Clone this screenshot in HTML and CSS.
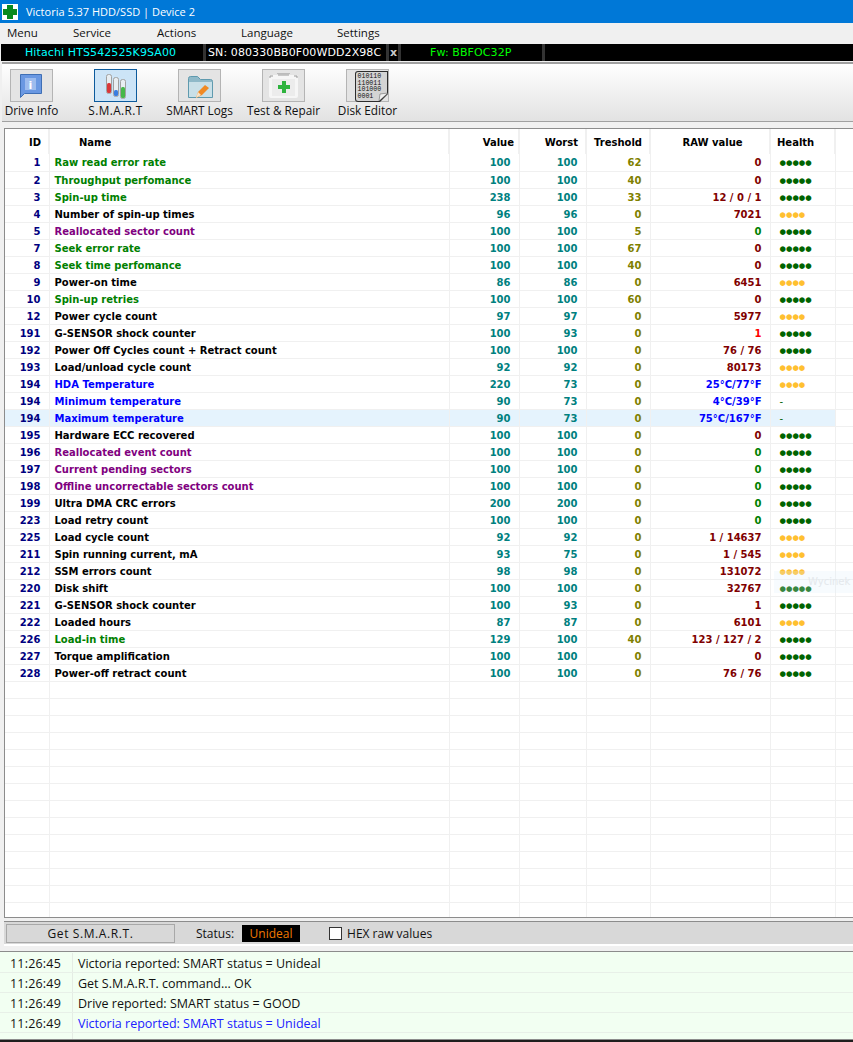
FILE: index.html
```html
<!DOCTYPE html>
<html lang="en">
<head>
  <meta charset="UTF-8">
  <title>Victoria 5.37 HDD/SSD | Device 2</title>
  <link rel="stylesheet" href="styles.css">
</head>
<body>
  <div class="window">
    <div class="titlebar">
      <svg class="app-icon" width="16" height="16" viewBox="0 0 16 16"><rect width="16" height="16" fill="#fff"/><path d="M5 1h6v4h4v6h-4v4H5v-4H1V5h4z" fill="#0a8a1e"/></svg>
      <span>Victoria 5.37 HDD/SSD | Device 2</span>
    </div>
    <div class="menubar"><span>Menu</span><span>Service</span><span>Actions</span><span>Language</span><span>Settings</span></div>
    <div class="drivebar">
      <span class="model">Hitachi HTS542525K9SA00</span>
      <span class="serial">SN: 080330BB0F00WDD2X98C</span>
      <span class="close">x</span>
      <span class="firmware">Fw: BBFOC32P</span>
    </div>
    <div class="toolbar">
      <div class="tool"><div class="tool-btn"><svg width="41" height="31" viewBox="0 0 41 31"><path d="M9.500 4.500h21v19H13.500l-4 4z" fill="#6a98e2" stroke="#3f6fb5"/><rect x="14" y="8" width="11" height="12" fill="#9dbcee"/><text x="19.500" y="19" class="info-i">i</text></svg></div><span>Drive Info</span></div>
      <div class="tool active"><div class="tool-btn"><svg width="41" height="31" viewBox="0 0 41 31"><rect x="11.500" y="4.500" width="5" height="19" rx="2" fill="#e8eef2" stroke="#a0a0a0"/><rect x="12" y="13" width="4" height="10" rx="1.500" fill="#d9383a"/><rect x="18.500" y="7.500" width="5" height="19" rx="2" fill="#e8eef2" stroke="#a0a0a0"/><rect x="19" y="20" width="4" height="6" rx="1.500" fill="#3a7ee0"/><rect x="25.500" y="9.500" width="5" height="19" rx="2" fill="#e8eef2" stroke="#a0a0a0"/><rect x="26" y="17" width="4" height="11" rx="1.500" fill="#45b84a"/></svg></div><span>S.M.A.R.T</span></div>
      <div class="tool"><div class="tool-btn"><svg width="41" height="31" viewBox="0 0 41 31"><path d="M9.500 8.500q0-2 2-2h7l3 3h10q2 0 2 2v16h-24z" fill="#8fb9c8" stroke="#5f9aae"/><rect x="10" y="12" width="23" height="15" fill="#c9e0e8"/><path d="M17 28l2-6 7-7 4 3-7 7z" fill="#f08a24"/><path d="M17 28l2-6 3 3z" fill="#f6e3c8"/></svg></div><span>SMART Logs</span></div>
      <div class="tool"><div class="tool-btn"><svg width="41" height="31" viewBox="0 0 41 31"><rect x="6" y="5" width="29" height="23" rx="2" fill="#f6f6f6"/><path d="M7 8V6h3M34 8V6h-3M15 5h11" fill="none" stroke="#999"/><path d="M14 3.500h13" stroke="#bbb"/><rect x="9" y="9" width="23" height="17" fill="#ececec"/><path d="M19 11h4v4h4v4h-4v4h-4v-4h-4v-4h4z" fill="#2eb33e"/></svg></div><span>Test &amp; Repair</span></div>
      <div class="tool"><div class="tool-btn"><svg width="41" height="31" viewBox="0 0 41 31" class="disk"><path d="M11 1h30v23l-8 8H11q-3 0-3-3V4q0-3 3-3z" fill="#2d2d2d"/><path d="M11 2h29v21l-8 8H11q-2 0-2-2V4q0-2 2-2z" fill="#d4d4d4"/><path d="M32 31l1-7 8-1z" fill="#f0f0f0" stroke="#555" stroke-width=".5"/><text x="10.500" y="8" class="bits">010110</text><text x="10.500" y="15" class="bits">110011</text><text x="10.500" y="21" class="bits">101000</text><text x="10.500" y="28" class="bits">0001</text></svg></div><span>Disk Editor</span></div>
    </div>

    <div class="grid-wrap">
      <table class="smart">
        <colgroup><col class="c-id"><col class="c-name"><col class="c-val"><col class="c-worst"><col class="c-tres"><col class="c-raw"><col class="c-health"><col></colgroup>
        <thead><tr><th class="num">ID</th><th class="name-head">Name</th><th class="num value-head">Value</th><th class="num">Worst</th><th class="num">Treshold</th><th class="raw-head">RAW value</th><th class="health-head">Health</th><th></th></tr></thead>
        <tbody>
          <tr class="g"><td class="id">1</td><td class="name">Raw read error rate</td><td class="val">100</td><td class="val">100</td><td class="tres">62</td><td class="raw">0</td><td class="good">●●●●●</td><td></td></tr>
          <tr class="g"><td class="id">2</td><td class="name">Throughput perfomance</td><td class="val">100</td><td class="val">100</td><td class="tres">40</td><td class="raw">0</td><td class="good">●●●●●</td><td></td></tr>
          <tr class="g"><td class="id">3</td><td class="name">Spin-up time</td><td class="val">238</td><td class="val">100</td><td class="tres">33</td><td class="raw">12 / 0 / 1</td><td class="good">●●●●●</td><td></td></tr>
          <tr><td class="id">4</td><td class="name">Number of spin-up times</td><td class="val">96</td><td class="val">96</td><td class="tres">0</td><td class="raw">7021</td><td class="warn">●●●●</td><td></td></tr>
          <tr class="p"><td class="id">5</td><td class="name">Reallocated sector count</td><td class="val">100</td><td class="val">100</td><td class="tres">5</td><td class="raw zero">0</td><td class="good">●●●●●</td><td></td></tr>
          <tr class="g"><td class="id">7</td><td class="name">Seek error rate</td><td class="val">100</td><td class="val">100</td><td class="tres">67</td><td class="raw">0</td><td class="good">●●●●●</td><td></td></tr>
          <tr class="g"><td class="id">8</td><td class="name">Seek time perfomance</td><td class="val">100</td><td class="val">100</td><td class="tres">40</td><td class="raw">0</td><td class="good">●●●●●</td><td></td></tr>
          <tr><td class="id">9</td><td class="name">Power-on time</td><td class="val">86</td><td class="val">86</td><td class="tres">0</td><td class="raw">6451</td><td class="warn">●●●●</td><td></td></tr>
          <tr class="g"><td class="id">10</td><td class="name">Spin-up retries</td><td class="val">100</td><td class="val">100</td><td class="tres">60</td><td class="raw">0</td><td class="good">●●●●●</td><td></td></tr>
          <tr><td class="id">12</td><td class="name">Power cycle count</td><td class="val">97</td><td class="val">97</td><td class="tres">0</td><td class="raw">5977</td><td class="warn">●●●●</td><td></td></tr>
          <tr><td class="id">191</td><td class="name">G-SENSOR shock counter</td><td class="val">100</td><td class="val">93</td><td class="tres">0</td><td class="raw red">1</td><td class="good">●●●●●</td><td></td></tr>
          <tr><td class="id">192</td><td class="name">Power Off Cycles count + Retract count</td><td class="val">100</td><td class="val">100</td><td class="tres">0</td><td class="raw">76 / 76</td><td class="good">●●●●●</td><td></td></tr>
          <tr><td class="id">193</td><td class="name">Load/unload cycle count</td><td class="val">92</td><td class="val">92</td><td class="tres">0</td><td class="raw">80173</td><td class="warn">●●●●</td><td></td></tr>
          <tr class="b"><td class="id">194</td><td class="name">HDA Temperature</td><td class="val">220</td><td class="val">73</td><td class="tres">0</td><td class="raw temp">25°C/77°F</td><td class="warn">●●●●</td><td></td></tr>
          <tr class="b"><td class="id">194</td><td class="name">Minimum temperature</td><td class="val">90</td><td class="val">73</td><td class="tres">0</td><td class="raw temp">4°C/39°F</td><td class="good dash">-</td><td></td></tr>
          <tr class="b selected"><td class="id">194</td><td class="name">Maximum temperature</td><td class="val">90</td><td class="val">73</td><td class="tres">0</td><td class="raw temp">75°C/167°F</td><td class="good dash">-</td><td class="tail"></td></tr>
          <tr><td class="id">195</td><td class="name">Hardware ECC recovered</td><td class="val">100</td><td class="val">100</td><td class="tres">0</td><td class="raw">0</td><td class="good">●●●●●</td><td></td></tr>
          <tr class="p"><td class="id">196</td><td class="name">Reallocated event count</td><td class="val">100</td><td class="val">100</td><td class="tres">0</td><td class="raw zero">0</td><td class="good">●●●●●</td><td></td></tr>
          <tr class="p"><td class="id">197</td><td class="name">Current pending sectors</td><td class="val">100</td><td class="val">100</td><td class="tres">0</td><td class="raw zero">0</td><td class="good">●●●●●</td><td></td></tr>
          <tr class="p"><td class="id">198</td><td class="name">Offline uncorrectable sectors count</td><td class="val">100</td><td class="val">100</td><td class="tres">0</td><td class="raw zero">0</td><td class="good">●●●●●</td><td></td></tr>
          <tr><td class="id">199</td><td class="name">Ultra DMA CRC errors</td><td class="val">200</td><td class="val">200</td><td class="tres">0</td><td class="raw zero">0</td><td class="good">●●●●●</td><td></td></tr>
          <tr><td class="id">223</td><td class="name">Load retry count</td><td class="val">100</td><td class="val">100</td><td class="tres">0</td><td class="raw zero">0</td><td class="good">●●●●●</td><td></td></tr>
          <tr><td class="id">225</td><td class="name">Load cycle count</td><td class="val">92</td><td class="val">92</td><td class="tres">0</td><td class="raw">1 / 14637</td><td class="warn">●●●●</td><td></td></tr>
          <tr><td class="id">211</td><td class="name">Spin running current, mA</td><td class="val">93</td><td class="val">75</td><td class="tres">0</td><td class="raw">1 / 545</td><td class="warn">●●●●</td><td></td></tr>
          <tr><td class="id">212</td><td class="name">SSM errors count</td><td class="val">98</td><td class="val">98</td><td class="tres">0</td><td class="raw">131072</td><td class="warn">●●●●</td><td></td></tr>
          <tr><td class="id">220</td><td class="name">Disk shift</td><td class="val">100</td><td class="val">100</td><td class="tres">0</td><td class="raw">32767</td><td class="good">●●●●●</td><td></td></tr>
          <tr><td class="id">221</td><td class="name">G-SENSOR shock counter</td><td class="val">100</td><td class="val">93</td><td class="tres">0</td><td class="raw">1</td><td class="good">●●●●●</td><td></td></tr>
          <tr><td class="id">222</td><td class="name">Loaded hours</td><td class="val">87</td><td class="val">87</td><td class="tres">0</td><td class="raw">6101</td><td class="warn">●●●●</td><td></td></tr>
          <tr class="g"><td class="id">226</td><td class="name">Load-in time</td><td class="val">129</td><td class="val">100</td><td class="tres">40</td><td class="raw">123 / 127 / 2</td><td class="good">●●●●●</td><td></td></tr>
          <tr><td class="id">227</td><td class="name">Torque amplification</td><td class="val">100</td><td class="val">100</td><td class="tres">0</td><td class="raw">0</td><td class="good">●●●●●</td><td></td></tr>
          <tr><td class="id">228</td><td class="name">Power-off retract count</td><td class="val">100</td><td class="val">100</td><td class="tres">0</td><td class="raw">76 / 76</td><td class="good">●●●●●</td><td></td></tr>
          <tr><td></td><td></td><td></td><td></td><td></td><td></td><td></td><td></td></tr>
          <tr><td></td><td></td><td></td><td></td><td></td><td></td><td></td><td></td></tr>
          <tr><td></td><td></td><td></td><td></td><td></td><td></td><td></td><td></td></tr>
          <tr><td></td><td></td><td></td><td></td><td></td><td></td><td></td><td></td></tr>
          <tr><td></td><td></td><td></td><td></td><td></td><td></td><td></td><td></td></tr>
          <tr><td></td><td></td><td></td><td></td><td></td><td></td><td></td><td></td></tr>
          <tr><td></td><td></td><td></td><td></td><td></td><td></td><td></td><td></td></tr>
          <tr><td></td><td></td><td></td><td></td><td></td><td></td><td></td><td></td></tr>
          <tr><td></td><td></td><td></td><td></td><td></td><td></td><td></td><td></td></tr>
          <tr><td></td><td></td><td></td><td></td><td></td><td></td><td></td><td></td></tr>
          <tr><td></td><td></td><td></td><td></td><td></td><td></td><td></td><td></td></tr>
          <tr><td></td><td></td><td></td><td></td><td></td><td></td><td></td><td></td></tr>
          <tr><td></td><td></td><td></td><td></td><td></td><td></td><td></td><td></td></tr>
          <tr><td></td><td></td><td></td><td></td><td></td><td></td><td></td><td></td></tr>
        </tbody>
      </table>
      <div class="ghost-tip">Wycinek</div>
    </div>

    <div class="statusbar">
      <div class="get-btn">Get S.M.A.R.T.</div>
      <span class="status-label">Status:</span>
      <span class="status-value">Unideal</span>
      <span class="checkbox"></span>
      <span>HEX raw values</span>
    </div>

    <div class="log">
      <div class="log-row"><span class="time">11:26:45</span><span>Victoria reported: SMART status = Unideal</span></div>
      <div class="log-row"><span class="time">11:26:49</span><span>Get S.M.A.R.T. command... OK</span></div>
      <div class="log-row"><span class="time">11:26:49</span><span>Drive reported: SMART status = GOOD</span></div>
      <div class="log-row blue"><span class="time">11:26:49</span><span>Victoria reported: SMART status = Unideal</span></div>
      <div class="log-row last"><span class="time"></span></div>
    </div>
    <div class="bottom-edge"></div>
  </div>
</body>
</html>
```
FILE: styles.css
```css
html, body {
  margin: 0;
  padding: 0;
  background: #f0f0f0;
}

.window {
  width: 853px;
  height: 1042px;
  display: flex;
  flex-direction: column;
  overflow: hidden;
  font-family: "DejaVu Sans", sans-serif;
  font-size: 11px;
  color: #111;
}

/* Title and menu */
.titlebar {
  height: 23px;
  flex: none;
  background: #0078d7;
  color: #fff;
  display: flex;
  align-items: center;
  gap: 8px;
  padding-left: 2px;
  font-family: "Open Sans", sans-serif;
  font-size: 11px;
}

.menubar {
  height: 21px;
  flex: none;
  box-sizing: border-box;
  padding: 0 0 3px 7px;
  background: #f0f0f0;
  display: grid;
  grid-template-columns: 66px 84px 84px 96px auto;
  align-items: center;
  font-family: "Open Sans", sans-serif;
  font-size: 11.500px;
}

/* Black drive info strip */
.drivebar {
  height: 17px;
  flex: none;
  margin-left: 1px;
  background: #000;
  display: flex;
  align-items: center;
  font-size: 11px;
  letter-spacing: 0.1px;
  white-space: nowrap;
}

.drivebar span {
  height: 17px;
  line-height: 17px;
  box-sizing: border-box;
  border-right: 3px solid #333;
}

.model { width: 205px; padding-left: 24px; color: #00ffff; }
.serial { width: 183px; padding-left: 2px; color: #fff; }
.close { width: 12px; padding-left: 1px; color: #ccc; font-weight: bold; }
.firmware { width: 144px; padding-left: 29px; color: #00ff00; }

/* Toolbar */
.toolbar {
  height: 60px;
  flex: none;
  margin: 1px 0 0 2px;
  padding: 5px 0 0 8px;
  box-sizing: border-box;
  display: flex;
  gap: 41px;
  border-top: 2px solid #a0a0a0;
  border-bottom: 1px solid #a0a0a0;
  background: linear-gradient(to bottom, #fff, #e2e2e2);
}

.tool {
  width: 43px;
  display: flex;
  flex-direction: column;
  align-items: center;
  font-family: "Open Sans", sans-serif;
  font-size: 11.800px;
  line-height: 15px;
  white-space: nowrap;
}

.tool:nth-child(2) span { letter-spacing: 0.4px; }

.tool-btn {
  width: 43px;
  height: 33px;
  flex: none;
  margin-bottom: 1px;
  box-sizing: border-box;
  border: 1px solid #b4b4b4;
  background: #e4e4e4;
}

.tool-btn svg { display: block; overflow: visible; }

.active .tool-btn {
  border-color: #0c5a9c;
  background: #cce4f7;
}

.info-i {
  font-family: "DejaVu Sans", sans-serif;
  font-size: 11px;
  font-weight: bold;
  fill: #fff;
  text-anchor: middle;
}

.bits {
  font-family: "Liberation Mono", monospace;
  font-size: 6.600px;
  fill: #111;
}

/* SMART table */
.grid-wrap {
  position: relative;
  height: 790px;
  flex: none;
  box-sizing: border-box;
  margin: 6px 0 0 4px;
  background: #fff;
  border-top: 1px solid #8c8c8c;
  border-left: 1px solid #8c8c8c;
  border-bottom: 1px solid #8c8c8c;
  overflow: hidden;
}

.smart {
  table-layout: fixed;
  width: 848px;
  border-collapse: collapse;
  font-size: 10px;
  font-weight: bold;
}

.c-id { width: 44px; }
.c-name { width: 400px; }
.c-val { width: 70px; }
.c-worst { width: 67px; }
.c-tres { width: 64px; }
.c-raw { width: 120px; }
.c-health { width: 65px; }

.smart th {
  height: 25px;
  padding: 1px 7px 0 0;
  box-sizing: border-box;
  border-right: 2px solid #f0f0f0;
  color: #000;
  text-align: right;
}

.smart th:last-child { border-right: 0; }
.smart th.name-head { text-align: left; padding-left: 29px; }
.smart th.value-head { padding-right: 4px; }
.smart th.raw-head { text-align: center; padding-left: 12px; }
.smart th.health-head { text-align: left; padding-left: 6px; }

.smart td {
  height: 17px;
  padding: 1px 8px 0 5px;
  box-sizing: border-box;
  border-right: 1px solid #f0f0f0;
  border-bottom: 1px solid #f0f0f0;
  line-height: 15px;
  text-align: right;
  white-space: nowrap;
  overflow: hidden;
}

.smart td:last-child { border-right: 0; }
.smart td.tail { background: #fff; }

.id { color: #000080; }
.smart td.name { text-align: left; color: #000; }
.g .name { color: #008000 !important; }
.p .name { color: #800080 !important; }
.b .name { color: #0000ff !important; }
.val { color: #008080; }
.tres { color: #808000; }
.raw { color: #800000; }
.raw.zero { color: #008000; }
.raw.red { color: #ff0000; }
.raw.temp { color: #0000ff; }

.smart td.good,
.smart td.warn {
  padding-left: 9px;
  text-align: left;
  font-size: 7.400px;
}

.good { color: #006400; }
.warn { color: #ffc030; }
.smart td.dash { font-size: 10px; font-weight: normal; }

.selected td { background: #e5f3fd; }

.ghost-tip {
  position: absolute;
  left: 769px;
  top: 442px;
  width: 79px;
  height: 22px;
  padding: 5px 0 0 34px;
  box-sizing: border-box;
  background: rgba(225, 240, 250, 0.25);
  color: #e4e8ec;
  font-size: 10px;
  white-space: nowrap;
}

/* Status row */
.statusbar {
  height: 25px;
  flex: none;
  box-sizing: border-box;
  margin: 3px 0 0 4px;
  border-top: 1px solid #8c8c8c;
  border-bottom: 2px solid #fff;
  background: #d8d8d8;
  display: flex;
  align-items: center;
  font-family: "Open Sans", sans-serif;
  font-size: 12px;
}

.get-btn {
  width: 169px;
  height: 19px;
  margin-left: 2px;
  box-sizing: border-box;
  border: 1px solid #a8a8a8;
  text-align: center;
  letter-spacing: 0.6px;
  line-height: 17px;
}

.status-label { margin-left: 21px; }

.status-value {
  width: 58px;
  height: 17px;
  margin-left: 8px;
  background: #000;
  color: #f07800;
  text-align: center;
  line-height: 17px;
}

.checkbox {
  width: 11px;
  height: 11px;
  margin: 0 5px 0 29px;
  background: #fff;
  border: 1px solid #333;
}

/* Log */
.log {
  height: 89px;
  flex: none;
  box-sizing: border-box;
  margin-top: 5px;
  padding-top: 1px;
  border-top: 1px solid #8c8c8c;
  border-bottom: 1px solid #8c8c8c;
  background: #f2fff2;
  font-family: "Open Sans", sans-serif;
  font-size: 12.500px;
}

.log-row {
  height: 20px;
  display: flex;
  line-height: 21px;
  border-bottom: 1px solid #e8f0e8;
  box-sizing: border-box;
}

.log-row.last { height: 6px; border-bottom: 0; }

.time {
  width: 73px;
  padding-left: 10px;
  box-sizing: border-box;
  margin-right: 5px;
  letter-spacing: 0.2px;
  border-right: 1px solid #e4ece4;
}

.blue span:last-child { color: #2020ff; }

.bottom-edge {
  flex: 1;
  background: #1e1e1e;
}
```
